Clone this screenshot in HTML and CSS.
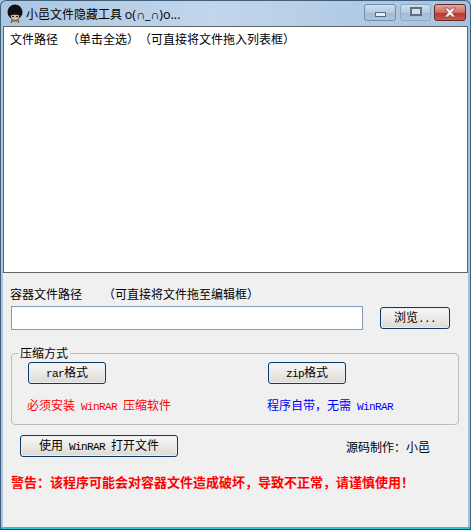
FILE: index.html
```html
<!DOCTYPE html>
<html lang="zh-CN">
<head>
  <meta charset="UTF-8" />
  <title>小邑文件隐藏工具</title>
  <link rel="stylesheet" href="styles.css">
</head>
<body>
  <div class="window">
    <div class="titlebar">
      <svg class="app-icon" width="18" height="20" viewBox="0 0 18 20">
        <path d="M5.500 15h7l1 4h-9z" fill="#6b6660"/>
        <path d="M6 17.500h6V19H6z" fill="#c9b8a0"/>
        <circle cx="9" cy="8" r="7.500" fill="#101012"/>
        <path d="M4.500 11.500C6 10.500 12 10.500 13.500 11.500 13 14.500 11 16 9 16s-4-1.500-4.500-4.500z" fill="#dcb89c"/>
        <path d="M6 12h2v1H6zM10 12h2v1h-2z" fill="#2a2022"/>
      </svg>
      <span class="title">小邑文件隐藏工具 <span class="title-latin">o(∩_∩)o...</span></span>
      <div class="controls">
        <div class="ctl"><span class="glyph-min"></span></div>
        <div class="ctl ctl-max"><span class="glyph-max"></span></div>
        <div class="ctl ctl-close">
          <svg width="16" height="11" viewBox="0 0 16 11"><path d="M2.500 1h3.500L8 3.200 10 1h3.500L10 5.500l3.500 4.500H10L8 7.800 6 10H2.500L6 5.500z" fill="#f4f0f0" stroke="#7a3a38" stroke-width=".7"/></svg>
        </div>
      </div>
    </div>
    <div class="client">
      <div class="listbox"><span class="list-head">文件路径</span>（单击全选）（可直接将文件拖入列表框）</div>
      <div class="form">
        <div class="path-label"><span>容器文件路径</span><span>（可直接将文件拖至编辑框）</span></div>
        <div class="path-row">
          <input class="path-input" type="text">
          <button class="btn btn-browse">浏览<span class="en">...</span></button>
        </div>
        <fieldset class="group">
          <legend>压缩方式</legend>
          <div class="group-cols">
            <div class="col">
              <button class="btn btn-format"><span class="en">rar</span>格式</button>
              <p class="note red">必须安装<span class="en"> WinRAR </span>压缩软件</p>
            </div>
            <div class="col col-zip">
              <button class="btn btn-format"><span class="en">zip</span>格式</button>
              <p class="note blue">程序自带，无需<span class="en"> WinRAR</span></p>
            </div>
          </div>
        </fieldset>
        <div class="open-row">
          <button class="btn btn-open">使用<span class="en"> WinRAR </span>打开文件</button>
          <span class="credit">源码制作：小邑</span>
        </div>
        <p class="warning">警告：该程序可能会对容器文件造成破坏，导致不正常，请谨慎使用！</p>
      </div>
    </div>
  </div>
</body>
</html>
```

FILE: styles.css
```css
* { box-sizing: border-box; margin: 0; padding: 0; }
html, body { width: 471px; height: 530px; overflow: hidden; }
body { font-family: "Noto Sans CJK SC", sans-serif; font-size: 12px; color: #000; background: #a9c6e2; text-spacing-trim: space-all; }
.en { font-family: "Liberation Mono", monospace; font-size: 11px; letter-spacing: -.6px; white-space: pre; }

.window { width: 471px; height: 530px; display: flex; flex-direction: column; background: linear-gradient(90deg, #a9c6e2, #c2d6eb 45%, #a4c2df); border: 1px solid #3f5f7c; border-radius: 6px 6px 0 0; border-bottom-color: #1c3a50; box-shadow: inset 0 -2px 0 #2bc0de; }
.titlebar { height: 25px; display: flex; align-items: center; padding-left: 5px; flex-shrink: 0; }
.app-icon { flex-shrink: 0; }
.title { margin-left: 2px; font-size: 12px; color: #000; white-space: nowrap; }
.title-latin { font-family: "Open Sans", sans-serif; font-size: 12.500px; }
.controls { margin-left: auto; margin-right: 4px; margin-top: -3px; display: flex; gap: 3px; }
.ctl { width: 32px; height: 17px; display: flex; align-items: center; justify-content: center; border: 1px solid #6f8dab; border-radius: 3px; background: linear-gradient(#d0dfee, #b4cbe2 50%, #9fbbd8 52%, #adc6e0); }
.ctl-max { width: 31px; margin-left: 1px; border-color: #8ba8c6; }
.ctl-close { width: 32px; border-color: #6a2a28; background: linear-gradient(#e8a59a, #cf6a5c 50%, #b8352a 52%, #c95a4c); }
.glyph-min { width: 11px; height: 5px; margin-top: 5px; background: #e8eef5; border: 1px solid #5a6a7c; }
.glyph-max { width: 12px; height: 9px; margin-top: -2px; border: 2px solid #5f7086; background: #d3dfec; }

.client { flex: 1; margin: 0 2px 2px 2px; background: #f0f0f0; display: flex; flex-direction: column; min-height: 0; }
.listbox { height: 247px; flex-shrink: 0; background: #fff; border: 1px solid #646464; padding: 4px 6px; line-height: 15px; white-space: pre; }
.list-head { margin-right: 9px; }

.form { padding: 13px 0 0 8px; }
.path-label { display: flex; gap: 21px; line-height: 16px; margin-left: -1px; }
.path-row { display: flex; align-items: center; margin-top: 4px; }
.path-input { width: 352px; height: 24px; border: 1px solid #7f9db9; background: #fff; outline: none; }
.btn { font-family: inherit; font-size: 12px; height: 22px; border: 1px solid #0a3a6a; border-radius: 3px; box-shadow: inset 0 0 0 1px #e9eef2; background: linear-gradient(#f6f6f4, #eceae6 50%, #dcd9d2); color: #000; line-height: 18px; white-space: nowrap; }
.btn-browse { width: 70px; margin-left: 17px; }

.group { width: 448px; min-width: 0; height: 79px; margin-top: 16px; border: 1px solid #bcbcbc; border-radius: 4px; padding: 0 0 0 16px; }
.group legend { margin-left: -10px; padding: 0 2px; line-height: 14px; }
.group-cols { display: flex; }
.col { width: 240px; flex-shrink: 0; }
.col-zip { width: auto; }
.btn-format { width: 78px; display: block; margin-top: 2px; }
.note { margin-top: 13px; margin-left: -1px; line-height: 16px; white-space: nowrap; }
.red { color: #ff0000; }
.blue { color: #0000ff; }

.open-row { display: flex; align-items: center; margin-top: 10px; margin-left: 9px; }
.btn-open { width: 158px; }
.credit { margin-left: 168px; }
.warning { margin-top: 17px; color: #ff0000; font-size: 13px; font-weight: bold; line-height: 16px; white-space: nowrap; }
```
